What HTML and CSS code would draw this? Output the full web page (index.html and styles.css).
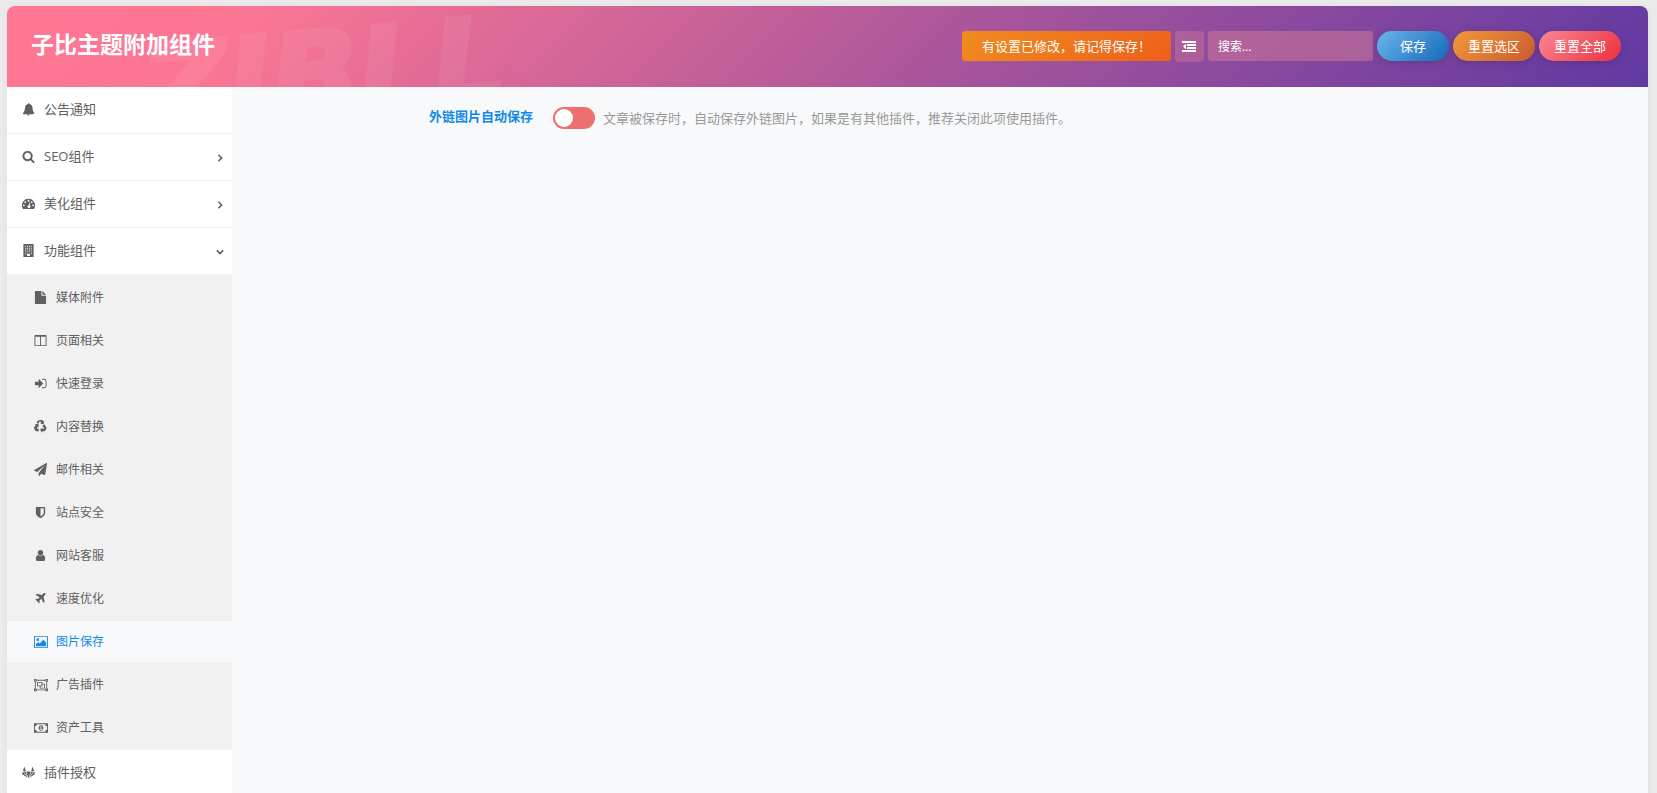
FILE: index.html
```html
<!DOCTYPE html>
<html lang="zh-CN">
<head>
<meta charset="utf-8">
<title>子比主题附加组件</title>
<link rel="stylesheet" href="styles.css">
</head>
<body>
<form class="panel">
  <header class="header">
    <span class="watermark" aria-hidden="true">ZIBLL</span>
    <h1 class="title">子比主题附加组件</h1>
    <div class="toolbar">
      <div class="notice" role="status">有设置已修改，请记得保存！</div>
      <button type="button" class="expand" aria-label="展开所有选项">
        <svg viewBox="0 0 14 11"><path d="M0 0h14v2H0zM5 3h9v2H5zM5 6h9v2H5zM0 9h14v2H0zM4 2.500v6L1 5.500z"/></svg>
      </button>
      <input class="search" type="text" placeholder="搜索..." aria-label="搜索">
      <button type="button" class="btn save">保存</button>
      <button type="button" class="btn reset-section">重置选区</button>
      <button type="button" class="btn reset-all">重置全部</button>
    </div>
  </header>
  <div class="body">
    <nav class="nav">
      <ul class="menu">
        <li><a href="#"><svg class="icon" viewBox="0 0 1792 1792"><path d="M896 1728c-97 0-176-79-176-160h352c0 81-79 160-176 160zM1664 1408c0 70-58 128-128 128H256c-70 0-128-58-128-128 148-125 320-349 320-832 0-192 159-402 424-441-5-12-8-25-8-39 0-53 43-96 96-96s96 43 96 96c0 14-3 27-8 39 265 39 424 249 424 441 0 483 172 707 292 832z" transform="translate(-30 0)"/></svg>公告通知</a></li>
        <li><a href="#"><svg class="icon" viewBox="0 0 1792 1792"><path d="M1216 832q0-185-131.500-316.500t-316.500-131.500-316.500 131.500-131.500 316.500 131.500 316.500 316.500 131.500 316.500-131.500 131.500-316.500zm512 832q0 52-38 90t-90 38q-54 0-90-38l-343-342q-179 124-399 124-143 0-273.500-55.500t-225-150-150-225-55.500-273.500 55.500-273.500 150-225 225-150 273.500-55.500 273.500 55.500 225 150 150 225 55.500 273.500q0 220-124 399l343 343q37 37 37 90z"/></svg>SEO组件<svg class="arrow" viewBox="0 0 10 10"><path d="M3 1l4 4-4 4"/></svg></a></li>
        <li><a href="#"><svg class="icon" viewBox="0 0 14 14"><path fill-rule="evenodd" d="M7 2a7 7 0 0 0-5.900 10.800c.1.200.3.200.5.200h10.800c.2 0 .4-.1.500-.2A7 7 0 0 0 7 2zM2 8a1 1 0 1 1 0 2 1 1 0 0 1 0-2zm1.500-3.500a1 1 0 1 1 0 2 1 1 0 0 1 0-2zM7 3a1 1 0 1 1 0 2 1 1 0 0 1 0-2zm1.200 2.800l.9.200-.8 3.200A1.500 1.500 0 1 1 7.300 9zM10.500 4.500a1 1 0 1 1 0 2 1 1 0 0 1 0-2zM12 8a1 1 0 1 1 0 2 1 1 0 0 1 0-2z"/></svg>美化组件<svg class="arrow" viewBox="0 0 10 10"><path d="M3 1l4 4-4 4"/></svg></a></li>
        <li><a href="#" aria-expanded="true"><svg class="icon" viewBox="0 0 14 14"><path fill-rule="evenodd" d="M1.500 0h11v14h-11zM3.500 2v1h1V2zm2 0v1h1V2zm2 0v1h1V2zm2 0v1h1V2zm-6 2v1h1V4zm2 0v1h1V4zm2 0v1h1V4zm2 0v1h1V4zm-6 2v1h1V6zm2 0v1h1V6zm2 0v1h1V6zm2 0v1h1V6zm-6 2v1h1V8zm2 0v1h1V8zm2 0v1h1V8zm2 0v1h1V8zm-6 2v1h1v-1zm6 0v1h1v-1zm-4 .5V13h3v-2.500z"/></svg>功能组件<svg class="arrow" viewBox="0 0 10 10"><path d="M1 3l4 4 4-4"/></svg></a>
          <ul class="submenu">
            <li><a href="#"><svg class="icon" viewBox="0 0 14 14"><path d="M1 0h7v5h5v8.300a.7.700 0 0 1-.7.700H1.700a.7.700 0 0 1-.7-.7zM9 0l4 4H9z"/></svg>媒体附件</a></li>
            <li><a href="#"><svg class="icon" viewBox="0 0 14 14"><path fill-rule="evenodd" d="M1.500 1h11c.5 0 1 .5 1 1v10c0 .5-.5 1-1 1h-11c-.5 0-1-.5-1-1V2c0-.5.500-1 1-1zm0 2v9h5V3zm6 0v9h5V3z"/></svg>页面相关</a></li>
            <li><a href="#"><svg class="icon" viewBox="0 0 14 14"><path d="M5 2l5 5-5 5V9H1V5h4zM8.500 2H11a2.500 2.500 0 0 1 2.500 2.500v5A2.500 2.500 0 0 1 11 12H8.500v-1H11a1.500 1.500 0 0 0 1.500-1.500v-5A1.500 1.500 0 0 0 11 3H8.500z"/></svg>快速登录</a></li>
            <li><a href="#"><svg class="icon" viewBox="0 0 14 14"><path d="M4.300.8C4.800.2 5.300 0 6 0h2.300c.6 0 1 .3 1.300.8l.6 1 1-.6-1 3.500-3.600-.8 1-.6L6.500.9 4.900 3.700 2.600 2.400zM1 4.500l3.500-.7 1 3.500-1-.5L3 9.400h2.200v2.800H3c-.8 0-1.300-.4-1.700-1L.3 9.500c-.3-.6-.3-1.100 0-1.700L1.900 5zM11.200 4.700l1.900 3.100c.4.600.4 1.200.1 1.800l-1 1.700c-.4.600-.8.900-1.500.9H9v1.500L6.500 10.900 9 8.200v1.300h2.300L8.900 6.100z"/></svg>内容替换</a></li>
            <li><a href="#"><svg class="icon" viewBox="0 0 1792 1792"><path d="M1764 11q33 24 27 64l-256 1536q-5 29-32 45-14 8-31 8-11 0-24-5l-453-185-242 295q-18 23-49 23-13 0-22-4-19-7-30.500-23.500t-11.500-36.500v-349l864-1059-1069 925-395-162q-37-14-40-55-2-40 32-59l1664-960q15-9 32-9 20 0 36 11z"/></svg>邮件相关</a></li>
            <li><a href="#"><svg class="icon" viewBox="0 0 1792 1792"><path d="M1344 960v-640h-448v1137q119-63 213-137 235-184 235-360zm192-768v768q0 86-33.500 170.500t-83 150-118 127.500-126.500 103-121 77.500-89.500 49.500-42.500 20q-12 6-26 6t-26-6q-16-7-42.500-20t-89.500-49.500-121-77.500-126.500-103-118-127.500-83-150-33.500-170.500v-768q0-26 19-45t45-19h1152q26 0 45 19t19 45z"/></svg>站点安全</a></li>
            <li><a href="#"><svg class="icon" viewBox="0 0 1792 1792"><path d="M1536 1399q0 109-62.500 187t-150.500 78h-854q-88 0-150.500-78t-62.500-187q0-85 8.500-160.500t31.500-152 58.500-131 94-89 134.500-34.500q131 128 313 128t313-128q76 0 134.500 34.500t94 89 58.500 131 31.500 152 8.500 160.500zm-256-887q0 159-112.500 271.500t-271.500 112.500-271.500-112.500-112.500-271.500 112.500-271.500 271.500-112.500 271.500 112.500 112.500 271.500z"/></svg>网站客服</a></li>
            <li><a href="#"><svg class="icon" viewBox="0 0 1792 1792"><path d="M1568 160q44 52 12 148t-108 172l-161 161 160 696q5 19-12 33l-128 96q-7 6-19 6-4 0-7-1-15-3-21-16l-279-508-259 259 53 194q5 17-8 31l-96 96q-9 9-23 9h-2q-15-2-24-13l-189-252-252-189q-11-7-13-23-1-13 9-25l96-97q9-9 23-9 6 0 8 1l194 53 259-259-508-279q-14-8-17-24-2-16 9-27l128-128q14-13 30-8l665 159 160-160q76-76 172-108t148 12z"/></svg>速度优化</a></li>
            <li><a href="#" class="active" aria-current="page"><svg class="icon wide" viewBox="0 0 15 13"><path fill-rule="evenodd" d="M1 0h13c.6 0 1 .4 1 1v11c0 .6-.4 1-1 1H1c-.6 0-1-.4-1-1V1c0-.6.400-1 1-1zm0 1v11h13V1zM4 2.500a1.500 1.500 0 1 1 0 3 1.500 1.500 0 0 1 0-3zM2 11V9l2.500-2.500L6 8l4-4 3 3v4z"/></svg>图片保存</a></li>
            <li><a href="#"><svg class="icon wide" viewBox="0 0 16 14"><path fill-rule="evenodd" d="M0 0h3v1h10V0h3v3h-1v8h1v3h-3v-1H3v1H0v-3h1V3H0zM3 2v1H2v8h1v1h10v-1h1V3h-1V2zM3.500 3.500h6v2h3v5.500h-6V8.500h-3zm1 1v3h4v-3zm5 2v2h-2V10h4V6.500zM1 1v1h1V1zm13 0v1h1V1zM1 12v1h1v-1zm13 0v1h1v-1z"/></svg>广告插件</a></li>
            <li><a href="#"><svg class="icon wide" viewBox="0 0 15 10"><path fill-rule="evenodd" d="M0 0h15v10H0zM3 1a2 2 0 0 1-2 2v4a2 2 0 0 1 2 2h9a2 2 0 0 1 2-2V3a2 2 0 0 1-2-2zM7.500 2C9 2 10 3.300 10 5S9 8 7.500 8 5 6.700 5 5s1-3 2.500-3zM7 3l-1 .8.4.5.6-.3v2H6v.8h3V6H8V3z"/></svg>资产工具</a></li>
          </ul>
        </li>
        <li><a href="#"><svg class="icon" viewBox="0 0 14 14"><path d="M2.500.5l1.600 4.900H1zM11.500.5L13 5.400H9.900zM.8 6l5.500 7L0 8.500zM13.200 6l.8 2.500L7.700 13zM4.500 6h5L7 13.500zM1.600 6h2.200l1.900 5.500zM12.400 6h-2.200l-1.900 5.500z"/></svg>插件授权</a></li>
      </ul>
    </nav>
    <main class="content">
      <div class="field">
        <label class="field-title" for="auto-save">外链图片自动保存</label>
        <div class="field-control">
          <input class="switch" type="checkbox" role="switch" id="auto-save" aria-describedby="auto-save-help">
          <span class="help" id="auto-save-help">文章被保存时，自动保存外链图片，如果是有其他插件，推荐关闭此项使用插件。</span>
        </div>
      </div>
    </main>
  </div>
</form>
</body>
</html>
```
FILE: styles.css
```css
* {
  box-sizing: border-box;
}

body {
  margin: 0;
  padding: 6px 9px 0 7px;
  background: #ebebeb;
  color: #606060;
  font-family: "Open Sans", "Noto Sans CJK SC", sans-serif;
  font-size: 13px;
  line-height: 20px;
  overflow: hidden;
}

ul {
  margin: 0;
  padding: 0;
  list-style: none;
}

a {
  color: inherit;
  text-decoration: none;
}

button,
input {
  margin: 0;
  border: 0;
  font: inherit;
}

.panel {
  display: flex;
  flex-direction: column;
  min-height: calc(100vh - 6px);
  border-radius: 8px 8px 0 0;
  box-shadow: 0 0 6px rgba(0, 0, 0, 0.06);
}

.header {
  position: relative;
  display: flex;
  align-items: flex-start;
  justify-content: space-between;
  padding: 24px 27px 25px 24px;
  border-radius: 8px 8px 0 0;
  background: linear-gradient(135deg, #ff7793 0%, #fb7694 15%, #a5549b 60%, #6039a3 100%);
  color: #fff;
  overflow: hidden;
}

.watermark {
  position: absolute;
  left: 136px;
  top: 28px;
  color: #fff;
  font-family: "DejaVu Sans", sans-serif;
  font-size: 116px;
  font-style: italic;
  font-weight: 700;
  line-height: 80px;
  opacity: 0.06;
  transform: rotate(-5deg);
  -webkit-text-stroke: 4px #fff;
}

.title {
  position: relative;
  margin: 0;
  font-size: 23px;
  font-weight: 700;
  line-height: 28px;
}

.toolbar {
  position: relative;
  display: flex;
  gap: 4px;
  padding-top: 1px;
}

.notice {
  height: 30px;
  padding: 0 20px;
  border-radius: 3px;
  background: linear-gradient(135deg, #f08c1e, #ee5f1c);
  line-height: 30px;
}

.expand {
  display: grid;
  place-items: center;
  width: 29px;
  height: 31px;
  padding: 0;
  border-radius: 4px;
  background: rgba(214, 123, 150, 0.4);
}

.expand svg {
  width: 14px;
  height: 11px;
  fill: #fff;
}

.search {
  width: 165px;
  height: 30px;
  padding: 0 10px;
  border-radius: 3px;
  background: rgba(214, 123, 150, 0.5);
  color: #fff;
  font-size: 12px;
}

.search::placeholder {
  color: #fff;
  opacity: 1;
}

.btn {
  height: 30px;
  padding: 0 15px 1px;
  border-radius: 15px;
  color: #fff;
  box-shadow: 0 2px 8px rgba(0, 0, 0, 0.16);
}

.save {
  padding: 0 23px 1px;
  background: linear-gradient(135deg, #6bb5ee, #1668b8);
}

.reset-section {
  background: linear-gradient(135deg, #f0993a, #cc5a2e);
}

.reset-all {
  background: linear-gradient(135deg, #fb8793, #ea2f3c);
}

.body {
  display: flex;
  flex: 1;
}

.nav {
  flex: 0 0 225px;
  background: #fff;
}

.menu > li > a {
  border-bottom: 1px solid #f1f1f1;
}

.menu a {
  display: flex;
  align-items: center;
  height: 47px;
  padding: 0 8px 2px 15px;
}

.icon {
  width: 13px;
  height: 13px;
  margin-right: 9px;
  fill: #606060;
}

.arrow {
  width: 8px;
  height: 8px;
  margin: 4px 0 0 auto;
  fill: none;
  stroke: #606060;
  stroke-width: 2;
}

.submenu {
  display: grid;
  gap: 2px;
  padding: 2px 0;
  background: #f1f1f1;
  font-size: 12px;
}

.menu .submenu a {
  height: 41px;
  padding: 0 8px 0 27px;
}

.submenu .icon {
  width: 13px;
  height: 13px;
  margin: 0 9px 0 0;
}

.menu .submenu .wide {
  width: 14px;
  height: 14px;
  margin-right: 8px;
}

.submenu .active {
  background: #f7f9fb;
  color: #1389e9;
}

.submenu .active .icon {
  fill: #1389e9;
}

.content {
  flex: 1;
  padding: 20px 30px;
  background: #f7f9fb;
}

.field {
  display: flex;
  align-items: flex-start;
  max-width: 1080px;
  padding-left: 167px;
}

.field-title {
  width: 124px;
  color: #1389e9;
  font-weight: 700;
  line-height: 18px;
}

.field-control {
  display: flex;
  align-items: center;
  gap: 8px;
}

.switch {
  display: flex;
  align-items: center;
  width: 42px;
  height: 22px;
  padding: 0 2px;
  border-radius: 11px;
  background: #ed6f6f;
  appearance: none;
}

.switch::before {
  width: 18px;
  height: 18px;
  border-radius: 50%;
  background: #fff;
  content: "";
}

.switch:checked {
  justify-content: flex-end;
  background: #1389e9;
}

.help {
  color: #999;
}
```
